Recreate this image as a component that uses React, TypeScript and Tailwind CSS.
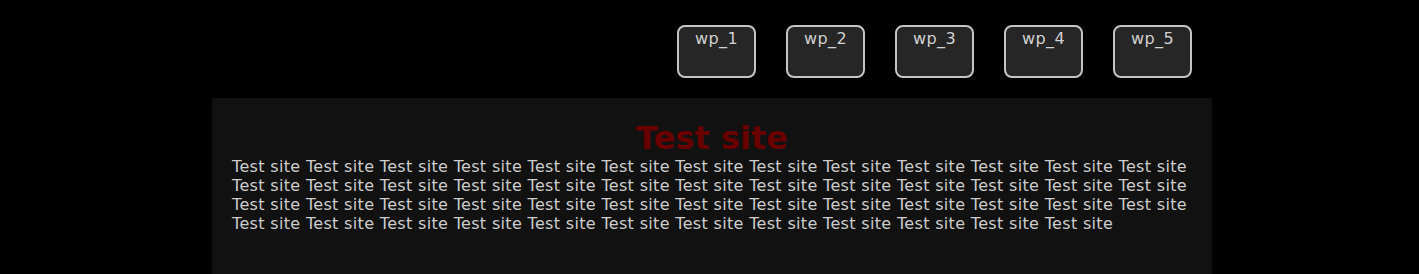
export default function App() {
  const labels = ["wp_1", "wp_2", "wp_3", "wp_4", "wp_5"];
  const body = Array.from({ length: 51 }, () => "Test site").join(" ");
  return (
    <div className="min-h-[274px] bg-black font-['DejaVu_Sans',sans-serif]">
      <div className="ml-[212px] w-[1000px]">
        <div className="flex justify-end gap-[30px] pr-[20px] pt-[25px] pb-[20px]">
          {labels.map((l) => (
            <div
              key={l}
              className="h-[53px] w-[79px] rounded-[8px] border-2 border-[#c4c4c4] bg-[#262626] pt-[2px] text-center text-[16px] leading-[19px] tracking-[0.4px] text-[#d0d0d0]"
            >
              {l}
            </div>
          ))}
        </div>
        <div className="min-h-[176px] bg-[#111111] px-[20px] pt-[22px] pb-[40px]">
          <h1 className="text-center text-[32px] font-bold leading-[37px] text-[#680000]">
            Test site
          </h1>
          <p className="text-[16px] leading-[19px] tracking-[0.33px] text-[#cccccc]">{body}</p>
        </div>
      </div>
    </div>
  );
}
